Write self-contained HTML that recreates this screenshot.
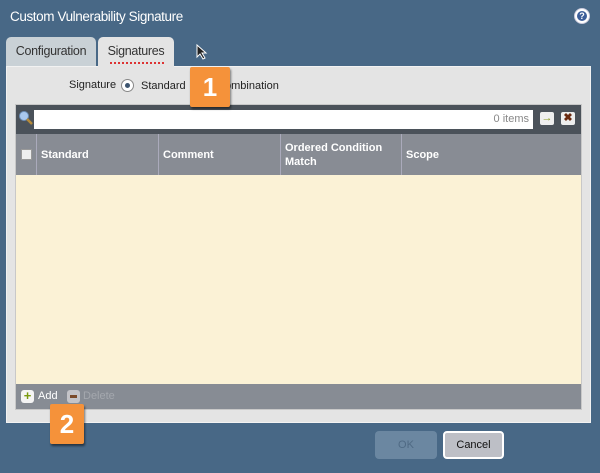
<!DOCTYPE html>
<html><head><style>
*{margin:0;padding:0;box-sizing:border-box}
body{width:600px;height:473px;background:#486886;font-family:"Liberation Sans",sans-serif;position:relative;overflow:hidden}
.a{position:absolute}
.title{left:10px;top:9px;color:#fff;font-size:13.5px;letter-spacing:-0.4px}
.help{left:574px;top:8px;width:16px;height:16px;border-radius:50%;background:#fff;border:1px solid #ccd;}
.help span{position:absolute;left:2px;top:2px;width:10px;height:10px;border-radius:50%;background:#3d5f9a;color:#fff;font-size:9px;font-weight:bold;text-align:center;line-height:10px}
.tab{top:37px;height:30px;border-radius:5px 5px 0 0;font-size:12.5px;letter-spacing:-0.3px;color:#333;text-align:center;line-height:28px}
.panel{left:6px;top:66px;width:585px;height:357px;background:#e4e4e4;border:1px solid #f2f2f2}
.grid{left:15px;top:104px;width:567px;height:306px;border:1px solid #c8c8c8}
.hd{color:#fff;font-weight:bold;font-size:11px}
.badge{background:#f5923a;color:#fff;font-size:26px;font-weight:bold;text-align:center;border-radius:2px;box-shadow:1px 2px 2px rgba(0,0,0,.5)}
</style></head><body>
<div class="a title">Custom Vulnerability Signature</div>
<div class="a help"><span>?</span></div>
<div class="a tab" style="left:6px;width:90px;background:#c9d1d6">Configuration</div>
<div class="a panel"></div>
<div class="a tab" style="left:98px;width:76px;background:#e4e4e4;height:31px">Signatures</div>
<div class="a" style="left:110px;top:62px;width:54px;border-top:2px dotted #d33"></div>
<svg class="a" style="left:196px;top:44px" width="12" height="16"><path d="M1 1 L1 13 L4 10 L7 15 L9 14 L6 9 L10 9 Z" fill="#222" stroke="#fff" stroke-width="1"/></svg>
<div class="a" style="left:69px;top:79px;font-size:11px;color:#222">Signature</div>
<div class="a" style="left:121px;top:79px;width:13px;height:13px;border-radius:50%;background:#fff;border:1px solid #888"><div style="margin:3px;width:5px;height:5px;border-radius:50%;background:#3d5570"></div></div>
<div class="a" style="left:141px;top:80px;font-size:11px;color:#222">Standard</div>
<div class="a" style="left:225px;top:80px;font-size:11px;color:#222">ombination</div>
<div class="a grid">
 <div class="a" style="left:0;top:0;width:565px;height:29px;background:#4b525a"></div>
 <svg class="a" style="left:2px;top:5px" width="16" height="16"><circle cx="6" cy="6" r="4.5" fill="#aac8ee" stroke="#6d8fb8"/><path d="M9 9 L14 14" stroke="#b58a3a" stroke-width="2.5"/></svg>
 <div class="a" style="left:18px;top:5px;width:499px;height:19px;background:#fff;font-size:11px;color:#888;text-align:right;padding:3px 4px">0 items</div>
 <div class="a" style="left:524px;top:7px;width:14px;height:13px;background:#eee;border-radius:2px;color:#8a9a20;font-size:11px;line-height:13px;text-align:center;font-weight:bold">→</div>
 <div class="a" style="left:545px;top:7px;width:14px;height:13px;background:#eee;border-radius:2px;color:#6a2a10;font-size:11px;line-height:13px;text-align:center;font-weight:bold">✖</div>
 <div class="a" style="left:0;top:29px;width:565px;height:41px;background:#888c94"></div>
 <div class="a" style="left:5px;top:44px;width:11px;height:11px;background:#eee;border:1px solid #999"></div>
 <div class="a" style="left:20px;top:29px;width:1px;height:41px;background:#aab"></div>
 <div class="a" style="left:142px;top:29px;width:1px;height:41px;background:#aab"></div>
 <div class="a" style="left:264px;top:29px;width:1px;height:41px;background:#aab"></div>
 <div class="a" style="left:385px;top:29px;width:1px;height:41px;background:#aab"></div>
 <div class="a hd" style="left:25px;top:44px">Standard</div>
 <div class="a hd" style="left:147px;top:44px">Comment</div>
 <div class="a hd" style="left:269px;top:36px;line-height:14px">Ordered Condition<br>Match</div>
 <div class="a hd" style="left:390px;top:44px">Scope</div>
 <div class="a" style="left:0;top:70px;width:565px;height:209px;background:#fbf2d6"></div>
 <div class="a" style="left:0;top:279px;width:565px;height:25px;background:#878c94"></div>
 <div class="a" style="left:5px;top:285px;width:13px;height:13px;background:#f4f4f4;border-radius:3px;color:#7a9a10;font-size:13px;font-weight:bold;line-height:12px;text-align:center">+</div>
 <div class="a" style="left:22px;top:285px;color:#fff;font-size:11px">Add</div>
 <div class="a" style="left:51px;top:285px;width:13px;height:13px;background:#c4c4c8;border-radius:3px"><div style="margin:5px 3px;height:3px;background:#7a4a2a"></div></div>
 <div class="a" style="left:67px;top:285px;color:#a4a8ae;font-size:11px">Delete</div>
</div>
<div class="a badge" style="left:190px;top:67px;width:40px;height:40px;line-height:40px">1</div>
<div class="a badge" style="left:50px;top:404px;width:34px;height:40px;line-height:40px">2</div>
<div class="a" style="left:375px;top:431px;width:62px;height:28px;background:#6b87a1;border-radius:4px;color:#4f6a84;font-size:11px;text-align:center;line-height:28px">OK</div>
<div class="a" style="left:443px;top:431px;width:61px;height:28px;background:#bdbfc6;border:2px solid #fff;border-radius:4px;color:#111;font-size:11px;text-align:center;line-height:24px">Cancel</div>
</body></html>
